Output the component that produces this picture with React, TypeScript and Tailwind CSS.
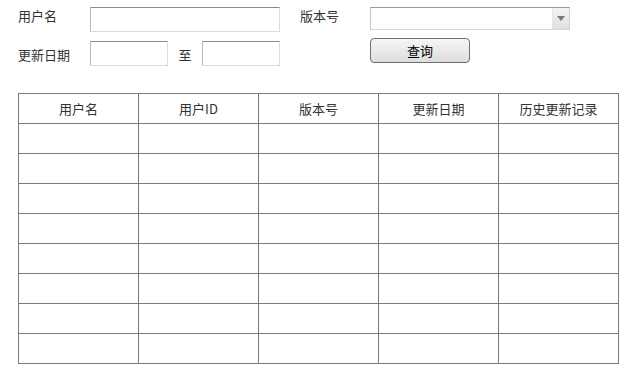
const font = { fontFamily: '"Microsoft YaHei", "Noto Sans CJK SC", "Liberation Sans", sans-serif' };

const COLUMNS = ['用户名', '用户ID', '版本号', '更新日期', '历史更新记录'];
const ROWS = [1, 2, 3, 4, 5, 6, 7, 8];

function TextInput({ width }: { width: string }) {
	return (
		<input
			type="text"
			className={`${width} h-[25px] bg-white border border-t-[#8a8a8a] border-l-[#b8b8b8] border-r-[#dcdcdc] border-b-[#dcdcdc] outline-none`}
		/>
	);
}

export default function App() {
	return (
		<div className="w-[638px] h-[376px] bg-white text-[13px] text-[#333]" style={font}>
			<div className="pl-[18px] pt-[7px]">
				<div className="flex items-start">
					<span className="w-[72px] leading-[17px]">用户名</span>
					<TextInput width="w-[190px]" />
					<span className="ml-[20px] w-[70px] leading-[17px]">版本号</span>
					<div className="flex w-[200px] h-[23px] border border-t-[#9a9a9a] border-l-[#c4c4c4] border-r-[#cfcfcf] border-b-[#d8d8d8] bg-white">
						<div className="flex-1" />
						<div className="w-[17px] h-full bg-gradient-to-b from-[#f4f4f4] to-[#dedede] border-l border-[#e6e6e6] flex items-center justify-center">
							<div className="w-0 h-0 border-l-[4px] border-r-[4px] border-t-[5px] border-l-transparent border-r-transparent border-t-[#777]" />
						</div>
					</div>
				</div>
				<div className="flex items-start mt-[9px]">
					<span className="w-[72px] mt-[5px] leading-[17px]">更新日期</span>
					<TextInput width="w-[78px]" />
					<span className="w-[34px] mt-[5px] leading-[17px] text-center">至</span>
					<TextInput width="w-[78px]" />
					<button
						type="button"
						className="ml-[90px] -mt-[3px] w-[100px] h-[25px] rounded-[4px] border border-[#707070] bg-gradient-to-b from-[#f6f6f6] to-[#dddddd] text-[13px] text-black leading-none"
					>
						查询
					</button>
				</div>
			</div>
			<table className="ml-[18px] mt-[27px] w-[600px] table-fixed border-collapse">
				<thead>
					<tr className="h-[30px]">
						{COLUMNS.map((col) => (
							<th key={col} className="w-[120px] border border-[#7a7a7a] font-normal text-center p-0">
								{col}
							</th>
						))}
					</tr>
				</thead>
				<tbody>
					{ROWS.map((row) => (
						<tr key={row} className="h-[30px]">
							{COLUMNS.map((col) => (
								<td key={col} className="border border-[#7a7a7a] p-0" />
							))}
						</tr>
					))}
				</tbody>
			</table>
		</div>
	);
}
